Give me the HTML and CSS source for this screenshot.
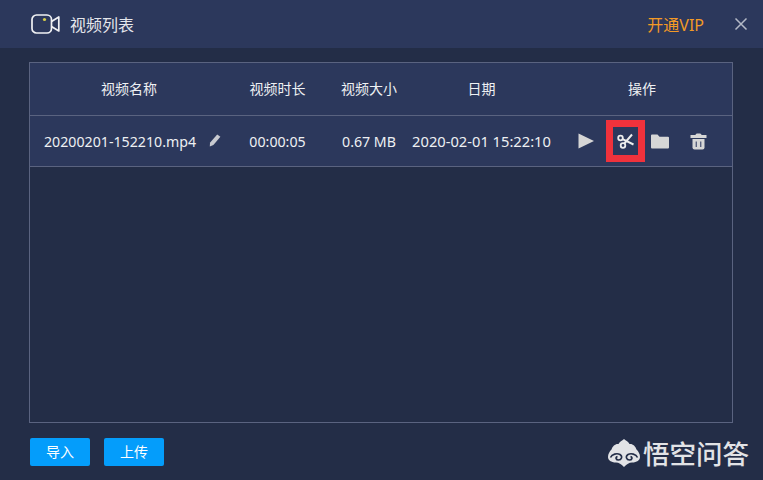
FILE: index.html
```html
<!DOCTYPE html>
<html lang="zh-CN">
<head>
  <meta charset="UTF-8" />
  <title>视频列表</title>
  <link rel="stylesheet" href="styles.css">
</head>
<body>
  <div class="window">

    <!-- 标题栏 -->
    <div class="titlebar">
      <svg class="cam-icon" width="29" height="20" viewBox="0 0 29 20">
        <rect x="1" y="1" width="19.5" height="18" rx="4.5" fill="none" stroke="#f0f1f4" stroke-width="1.7"/>
        <path d="M20.5 7.5 L27.8 3 V17 L20.5 12.5" fill="none" stroke="#f0f1f4" stroke-width="1.7" stroke-linejoin="round"/>
        <circle cx="13.5" cy="5.5" r="1.6" fill="#d8cf4a"/>
      </svg>
      <span class="title">视频列表</span>
      <span class="vip">开通VIP</span>
      <svg class="close" width="14" height="14" viewBox="0 0 14 14">
        <path d="M1.5 1.5 L12.5 12.5 M12.5 1.5 L1.5 12.5" stroke="#b4b9c6" stroke-width="1.5"/>
      </svg>
    </div>

    <div class="content">
      <div class="list">
        <div class="row head">
          <div class="col c1">视频名称</div>
          <div class="col c2">视频时长</div>
          <div class="col c3">视频大小</div>
          <div class="col c4">日期</div>
          <div class="col c5">操作</div>
        </div>
        <div class="row item">
          <div class="col c1 name">
            <span>20200201-152210.mp4</span>
            <svg class="pencil" width="12" height="13" viewBox="0 0 12 13">
              <path d="M8.2 0.6 L11.4 2.8 L4.4 11 L0.8 12.6 L1 8.8 Z" fill="#c8cad0"/>
            </svg>
          </div>
          <div class="col c2">00:00:05</div>
          <div class="col c3">0.67 MB</div>
          <div class="col c4 date">2020-02-01 15:22:10</div>
          <div class="col c5 actions">
            <svg class="act" width="16" height="16" viewBox="0 0 16 16">
              <path d="M0.5 0.5 L16 8 L0.5 15.5 Z" fill="#d6d6d6"/>
            </svg>
            <span class="mark">
              <svg width="17" height="16" viewBox="0 0 17 16">
                <circle cx="3.5" cy="5" r="2.3" fill="none" stroke="#eceded" stroke-width="1.8"/>
                <circle cx="6" cy="12.5" r="2.3" fill="none" stroke="#eceded" stroke-width="1.8"/>
                <path d="M7.2 10.6 L15 1.5 M5.6 6.2 L16.5 11.5" stroke="#eceded" stroke-width="2"/>
              </svg>
            </span>
            <svg class="act" width="18" height="15" viewBox="0 0 18 15">
              <path d="M0 1.5 Q0 0.5 1 0.5 H6.5 L8.5 2.7 H17 Q18 2.7 18 3.7 V13.5 Q18 14.5 17 14.5 H1 Q0 14.5 0 13.5 Z" fill="#d6d6d6"/>
            </svg>
            <svg class="act trash" width="17" height="17" viewBox="0 0 17 17">
              <path d="M5.5 2 Q5.5 0.5 7 0.5 H10 Q11.5 0.5 11.5 2 H16.5 V5 H0.5 V2 Z" fill="#d6d6d6"/>
              <path d="M2.5 6 H14.5 V14.5 Q14.5 16.5 12.5 16.5 H4.5 Q2.5 16.5 2.5 14.5 Z" fill="#d6d6d6"/>
              <path d="M6.3 8.5 V14 M10.7 8.5 V14" stroke="#5a6380" stroke-width="1.4"/>
            </svg>
          </div>
        </div>
      </div>

      <div class="buttons">
        <button class="btn">导入</button>
        <button class="btn">上传</button>
      </div>
    </div>

    <!-- 水印 -->
    <div class="watermark">
      <svg width="32" height="28" viewBox="0 0 32 28">
        <path d="M16 0 C18 2 20.5 2.5 21.5 5 C24.5 4.5 27.5 7 28.5 10.5 C30.5 12.5 32 15 32 18 C32 21 29 23.5 24 23.5 C21 23.5 19 25 16 28 C13 25 11 23.5 8 23.5 C3 23.5 0 21 0 18 C0 15 1.5 12.5 3.5 10.5 C4.5 7 7.5 4.5 10.5 5 C11.5 2.5 14 2 16 0 Z" fill="#e2e3e6"/>
        <path d="M2.5 18.5 C4 15 9 14 12 15.5 C15 17.5 13.5 21 10.5 21 C8 21 7 18.5 9.5 17.5 M29.5 18.5 C28 15 23 14 20 15.5 C17 17.5 18.5 21 21.5 21 C24 21 25 18.5 22.5 17.5" fill="none" stroke="#232d47" stroke-width="1.6"/>
      </svg>
      <span class="wm-text">悟空问答</span>
    </div>

  </div>
</body>
</html>
```

FILE: styles.css
```css
* {
  box-sizing: border-box;
}

body {
  margin: 0;
  background: #232d47;
  font-family: "Noto Sans", "Noto Sans CJK SC", sans-serif;
  color: #eef0f3;
}

.window {
  position: relative;
  width: 763px;
  height: 480px;
  overflow: hidden;
}

.titlebar {
  display: flex;
  align-items: center;
  height: 48px;
  padding-left: 31px;
  background: #2c385c;
}

.cam-icon {
  margin-right: 10px;
}

.title {
  font-size: 16px;
  color: #e4e6eb;
}

.vip {
  margin-left: auto;
  font-size: 16px;
  color: #f39a26;
}

.close {
  margin: 0 15px 0 30px;
}

.content {
  padding: 14px 30px 0 29px;
}

.list {
  height: 361px;
  border: 1px solid #5a6380;
}

.row {
  display: flex;
  align-items: center;
  border-bottom: 1px solid #5a6380;
  background: #2c385c;
}

.head {
  height: 53px;
  padding-bottom: 3px;
  font-size: 14px;
}

.item {
  height: 51px;
  font-size: 14.2px;
}

.col {
  text-align: center;
  white-space: nowrap;
}

.c1 { width: 198px; }
.c2 { width: 99px; }
.c3 { width: 84px; }
.c4 { width: 141px; }
.c5 { width: 180px; }

.name {
  display: flex;
  align-items: center;
  padding-left: 14px;
}

.date {
  font-size: 14.7px;
}

.pencil {
  margin-left: 13px;
  margin-bottom: 2px;
}

.actions {
  display: flex;
  align-items: center;
  padding-left: 26px;
}

.act {
  flex-shrink: 0;
}

.mark {
  display: flex;
  align-items: center;
  justify-content: center;
  width: 39px;
  height: 42px;
  margin: 0 6px 0 12px;
  border: 7px solid #f0323c;
}

.trash {
  margin-left: 21px;
}

.buttons {
  display: flex;
  gap: 14px;
  margin-top: 15px;
  padding-left: 1px;
}

.btn {
  width: 60px;
  height: 28px;
  padding: 0 0 2px;
  border: none;
  border-radius: 2px;
  background: #049dfb;
  color: #fff;
  font-family: inherit;
  font-size: 14px;
}

.watermark {
  position: absolute;
  left: 608px;
  top: 437px;
  display: flex;
  align-items: center;
  gap: 3px;
  color: #e2e3e6;
  font-size: 26.5px;
  font-weight: 500;
  line-height: 28px;
  white-space: nowrap;
}

.wm-text {
  padding-top: 3px;
}
```
